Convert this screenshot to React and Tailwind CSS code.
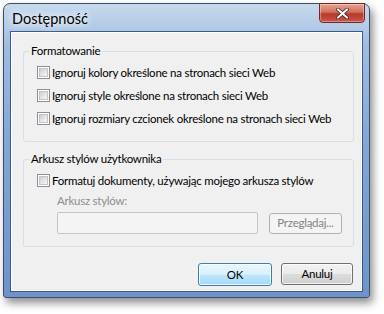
import React from "react";

function Checkbox() {
  return (
    <span className="flex h-[13px] w-[13px] shrink-0 items-center justify-center border border-[#8e8f8f] bg-white">
      <span className="h-[9px] w-[9px] bg-[linear-gradient(135deg,#c9ccd1_0%,#e2e4e7_50%,#f6f6f6_100%)] border border-[#c1c4c8]" />
    </span>
  );
}

function CheckRow({ label }) {
  return (
    <div className="flex h-[23px] items-center gap-[1px] whitespace-nowrap pl-[13px]">
      <Checkbox />
      <span className="pl-[1px] text-black">{label}</span>
    </div>
  );
}

function WinButton({ children, primary, disabled }) {
  if (disabled) {
    return (
      <div className="flex h-[21px] w-[73px] items-center justify-center rounded-[3px] border border-[#adb2b5] bg-[#f4f4f4] text-[#838383]">
        {children}
      </div>
    );
  }
  return (
    <div
      className={
        primary
          ? "flex h-[23px] w-[74px] items-center justify-center rounded-[3px] border border-[#3c7fb1] bg-[linear-gradient(#eaf6fd_0%,#d9f0fc_50%,#bee6fd_51%,#a7d9f5_100%)] text-black shadow-[inset_0_0_0_1px_rgba(255,255,255,0.8)]"
          : "flex h-[22px] w-[72px] items-center justify-center rounded-[3px] border border-[#707070] bg-[linear-gradient(#f2f2f2_0%,#ebebeb_50%,#dddddd_51%,#cfcfcf_100%)] text-black shadow-[inset_0_0_0_1px_rgba(255,255,255,0.7)]"
      }
    >
      {children}
    </div>
  );
}

export default function App() {
  return (
    <div className="h-[314px] w-[384px] overflow-hidden bg-white pl-[3px] pt-[3px] font-['Lato',sans-serif] text-[11.5px] leading-[16px] tracking-[-0.25px]">
      {/* Window frame */}
      <div className="relative flex h-[295px] w-[367px] flex-col rounded-t-[7px] rounded-b-[3px] border border-[#3d4e63] bg-[linear-gradient(180deg,#c6d9ee_0%,#b3cae6_8%,#9fbce2_14%,#86a7d6_45%,#6e93cc_100%)] px-[6px] pb-[5px] pt-[27px] shadow-[3px_5px_9px_rgba(0,0,0,0.45)]">
        {/* Title */}
        <div className="absolute left-[8px] top-[5px] text-[14.5px] leading-[20px] tracking-normal text-black [text-shadow:0_0_6px_#fff,0_0_10px_#fff]">
          Dostępność
        </div>
        {/* Close button */}
        <div className="absolute right-[4px] top-[-1px] flex h-[20px] w-[46px] items-center justify-center rounded-b-[4px] border border-[#6b2a26] bg-[linear-gradient(180deg,#e8a493_0%,#d0705c_45%,#b8392a_55%,#c9574a_100%)] shadow-[inset_0_0_0_1px_rgba(255,255,255,0.35)]">
          <svg width="13" height="11" viewBox="0 0 13 11">
            <path d="M2 1.5 L11 9.5 M11 1.5 L2 9.5" stroke="#3a1a16" strokeWidth="3.6" strokeLinecap="round" />
            <path d="M2 1.5 L11 9.5 M11 1.5 L2 9.5" stroke="#fff" strokeWidth="2.2" strokeLinecap="round" />
          </svg>
        </div>

        {/* Client area */}
        <div className="flex flex-1 flex-col border border-[#3a5a86] bg-[#f0f0f0] px-[12px] pr-[8px] shadow-[inset_0_0_0_1px_#ffffff]">
          <fieldset className="mt-[11px] rounded-[3px] border border-[#d5dfe5] pb-[11px] pl-0">
            <legend className="ml-[5px] px-[2px] text-black">Formatowanie</legend>
            <div className="pt-[2px]">
              <CheckRow label="Ignoruj kolory określone na stronach sieci Web" />
              <CheckRow label="Ignoruj style określone na stronach sieci Web" />
              <CheckRow label="Ignoruj rozmiary czcionek określone na stronach sieci Web" />
            </div>
          </fieldset>

          <fieldset className="mt-[9px] rounded-[3px] border border-[#d5dfe5] pb-[12px]">
            <legend className="ml-[5px] px-[2px] text-black">Arkusz stylów użytkownika</legend>
            <div className="pt-[2px]">
              <CheckRow label="Formatuj dokumenty, używając mojego arkusza stylów" />
            </div>
            <div className="pl-[33px] pt-[1px] text-[#8d8d8d]">Arkusz stylów:</div>
            <div className="mt-[3px] flex items-center gap-[11px] pl-[33px]">
              <div className="h-[22px] w-[201px] rounded-[2px] border border-[#c2c6ca] bg-[#f4f4f4]" />
              <WinButton disabled>Przeglądaj...</WinButton>
            </div>
          </fieldset>

          <div className="mt-[16px] flex justify-end gap-[9px] pr-[1px]">
            <WinButton primary>OK</WinButton>
            <WinButton>Anuluj</WinButton>
          </div>
        </div>
      </div>
    </div>
  );
}
